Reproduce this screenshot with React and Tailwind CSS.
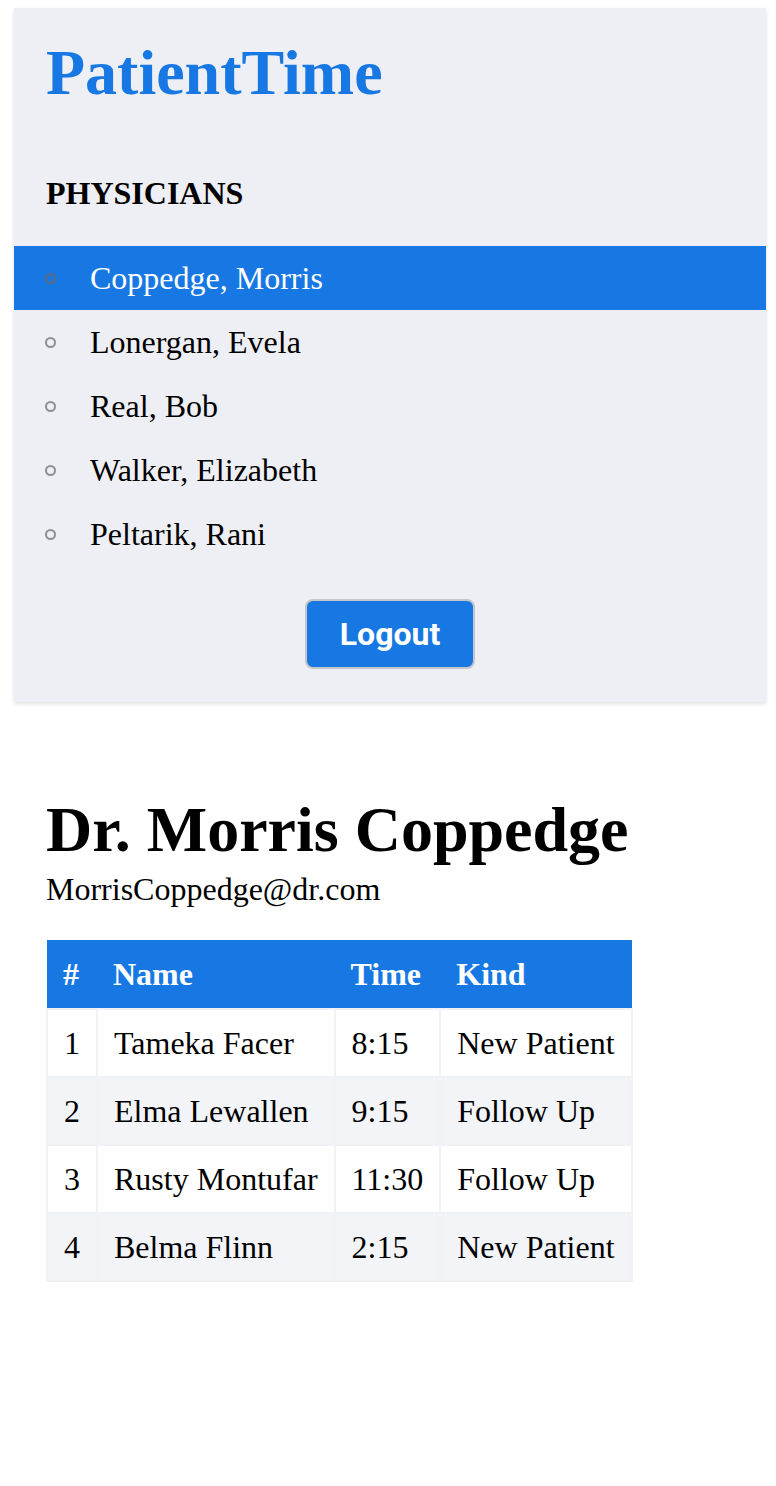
import React from 'react';

const physicians = [
  'Coppedge, Morris',
  'Lonergan, Evela',
  'Real, Bob',
  'Walker, Elizabeth',
  'Peltarik, Rani',
];

const appointments = [
  { n: 1, name: 'Tameka Facer', time: '8:15', kind: 'New Patient' },
  { n: 2, name: 'Elma Lewallen', time: '9:15', kind: 'Follow Up' },
  { n: 3, name: 'Rusty Montufar', time: '11:30', kind: 'Follow Up' },
  { n: 4, name: 'Belma Flinn', time: '2:15', kind: 'New Patient' },
];

export default function App() {
  const selected = 0;

  return (
    <div className="min-h-[1486px] bg-white text-black font-['Liberation_Serif',serif]">
      {/* Sidebar panel */}
      <div className="ml-[14px] mr-[10px] pt-2">
        <div className="bg-[#eeeff4] pt-[28px] pb-[33px] shadow-[0_2px_4px_rgba(0,0,0,0.12)]">
          <h1 className="px-8 text-[64px] leading-[74px] font-bold text-[#1778e3]">PatientTime</h1>
          <h3 className="px-8 mt-[65px] text-[32px] leading-[37px] font-bold">PHYSICIANS</h3>

          <ul className="mt-[34px]">
            {physicians.map((p, i) => {
              const isSel = i === selected;
              return (
                <li
                  key={p}
                  className={`flex items-center h-16 text-[32px] ${isSel ? 'bg-[#1778e3] text-white' : 'text-black'}`}
                >
                  <span
                    className={`ml-[31px] w-[11px] h-[11px] rounded-full border-2 flex-shrink-0 ${
                      isSel ? 'border-[#5f6b7c]' : 'border-[#8e8e8e]'
                    }`}
                  />
                  <span className="ml-[34px]">{p}</span>
                </li>
              );
            })}
          </ul>

          <div className="flex justify-center mt-[33px]">
            <button className="w-[170px] h-[70px] bg-[#1778e3] border-2 border-[#c4c6ca] rounded-lg text-white text-[32px] font-bold font-['Roboto',sans-serif]">
              Logout
            </button>
          </div>
        </div>
      </div>

      {/* Physician schedule */}
      <div className="px-[46px] pt-[91px]">
        <h1 className="text-[64px] leading-[74px] font-bold">Dr. Morris Coppedge</h1>
        <div className="mt-1 text-[32px] leading-[37px]">MorrisCoppedge@dr.com</div>

        <table className="mt-[32px] border-collapse text-[32px] leading-9">
          <thead>
            <tr className="bg-[#1778e3] text-white font-bold text-left">
              <th className="px-4 py-4 text-left">#</th>
              <th className="px-4 py-4 text-left">Name</th>
              <th className="px-4 py-4 text-left">Time</th>
              <th className="px-4 py-4 text-left">Kind</th>
            </tr>
          </thead>
          <tbody>
            {appointments.map((a, i) => (
              <tr key={a.n} className={i % 2 === 1 ? 'bg-[#f3f4f8]' : 'bg-white'}>
                <td className="px-4 py-[15px] border-2 border-[#f1f2f6]">{a.n}</td>
                <td className="px-4 py-[15px] border-2 border-[#f1f2f6] whitespace-nowrap">{a.name}</td>
                <td className="px-4 py-[15px] border-2 border-[#f1f2f6]">{a.time}</td>
                <td className="px-4 py-[15px] border-2 border-[#f1f2f6] whitespace-nowrap">{a.kind}</td>
              </tr>
            ))}
          </tbody>
        </table>
      </div>
    </div>
  );
}
